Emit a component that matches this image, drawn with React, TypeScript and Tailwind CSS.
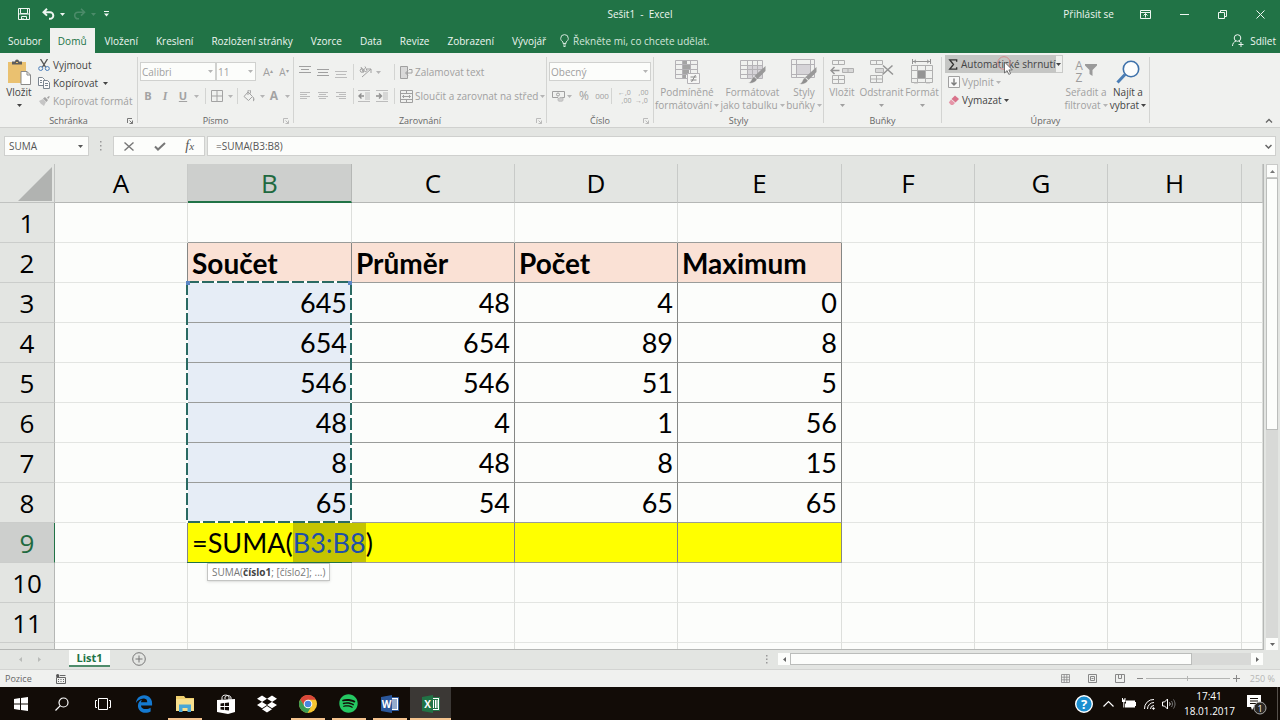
import type { ReactNode } from "react";
import { FaDropbox, FaEdgeLegacy, FaSpotify } from "react-icons/fa";

type Tone = "on" | "off";

function Arrow({ className = "" }: { className?: string }) {
  return (
    <svg viewBox="0 0 5 3" className={`h-[3px] w-[5px] shrink-0 ${className}`} fill="currentColor">
      <path d="M0 0h5L2.500 3z" />
    </svg>
  );
}

function Launcher({ tone }: { tone: Tone }) {
  return (
    <svg viewBox="0 0 6 6" className={`h-[6px] w-[6px] ${tone === "on" ? "text-[#777]" : "text-[#bbb]"}`} fill="none" stroke="currentColor">
      <path d="M.5 5V.5H5M2.500 2.500l3 3M5.500 2.500v3h-3" />
    </svg>
  );
}

function Group({ label, width, launcher, children }: { label: string; width: string; launcher?: Tone; children: ReactNode }) {
  return (
    <section aria-label={label} className={`flex shrink-0 flex-col justify-between ${width}`}>
      <div>{children}</div>
      <div className="relative flex h-3 items-center justify-center text-[9px] leading-3 text-[#666]">
        {label}
        {launcher && (
          <button aria-label={`${label} – další možnosti`} className="absolute right-1">
            <Launcher tone={launcher} />
          </button>
        )}
      </div>
    </section>
  );
}

function Divider() {
  return <div className="my-1 w-px shrink-0 bg-[#d3d4d2]" />;
}

function Sep() {
  return <div className="h-4 w-px bg-[#d3d4d2]" />;
}

function BigButton({ icon, lines, width, tone = "off", split = false }: { icon: ReactNode; lines: string[]; width: string; tone?: Tone; split?: boolean }) {
  return (
    <button className={`flex shrink-0 flex-col items-center leading-[13px] whitespace-nowrap ${width} ${tone === "on" ? "text-[#444]" : "text-[#a0a0a0]"}`}>
      <span className="flex h-7 items-center">{icon}</span>
      <span>{lines[0]}</span>
      <span className="flex h-[13px] items-center gap-0.5">
        {!split && lines[1]}
        <Arrow className={split || tone === "on" ? "" : "text-[#b5b5b5]"} />
      </span>
    </button>
  );
}

function HLines({ ys, xs, className = "" }: { ys: number[]; xs: [number, number][]; className?: string }) {
  return (
    <svg viewBox="0 0 12 12" className={`h-3 w-3 ${className}`} stroke="currentColor" fill="none">
      {ys.map((y, i) => (
        <path key={y} d={`M${xs[i][0]} ${y}H${xs[i][1]}`} />
      ))}
    </svg>
  );
}

function IconButton({ label, width, children }: { label: string; width: string; children: ReactNode }) {
  return (
    <button aria-label={label} className={`flex h-[18px] items-center justify-center ${width}`}>
      {children}
    </button>
  );
}

/* ---------- title bar and tabs ---------- */

function TitleBar() {
  return (
    <header className="grid h-7 grid-cols-3 items-center text-[#eef6f1]">
      <div className="flex items-center pl-[18px]">
        <button aria-label="Uložit">
          <svg viewBox="0 0 12 12" className="h-3 w-3" fill="none" stroke="currentColor">
            <path d="M.5.5h11v11H.5zM2.500.5v5h7v-5M3.500 11.500v-3h5v3" />
            <path d="M1 6h10M5 10v1.500" />
          </svg>
        </button>
        <button aria-label="Zpět" className="ml-3 flex items-center gap-[5px]">
          <svg viewBox="0 0 13 12" className="h-3 w-[13px]" fill="none" stroke="currentColor" strokeWidth="2">
            <path d="M5 .8 1.500 4.200 5 7.600M1.500 4.200H8a3.300 3.300 0 0 1 0 6.600H7" />
          </svg>
          <Arrow />
        </button>
        <button aria-label="Znovu" className="ml-2 flex items-center gap-[5px] text-[#4b8b69]">
          <svg viewBox="0 0 13 12" className="h-3 w-[13px]" fill="none" stroke="currentColor" strokeWidth="1.600">
            <path d="M8 .8l3.500 3.400L8 7.600M11.500 4.200H5a3.300 3.300 0 0 0 0 6.600h1" />
          </svg>
          <Arrow />
        </button>
        <button aria-label="Přizpůsobit panel nástrojů" className="ml-2">
          <svg viewBox="0 0 5 6" className="h-[6px] w-[5px]" fill="currentColor">
            <path d="M0 0h5v1H0zM0 2.500h5L2.500 5.500z" />
          </svg>
        </button>
      </div>
      <h1 className="text-center whitespace-pre">{"Sešit1  -  Excel"}</h1>
      <div className="flex items-center justify-end pr-[15px]">
        <button className="mr-[26px]">Přihlásit se</button>
        <button aria-label="Možnosti pásu karet" className="mr-[29px]">
          <svg viewBox="0 0 11 9" className="h-[9px] w-[11px]" fill="none" stroke="currentColor">
            <path d="M.5.5h10v8H.5zM.5 2.500h10M5.500 7.500v-4M3.500 5.500l2-2 2 2" />
          </svg>
        </button>
        <button aria-label="Minimalizovat" className="mr-[29px] flex h-[9px] items-center">
          <span className="h-px w-[9px] bg-[#eef6f1]" />
        </button>
        <button aria-label="Obnovit" className="mr-[29px]">
          <svg viewBox="0 0 9 9" className="h-[9px] w-[9px]" fill="none" stroke="currentColor">
            <path d="M.5 2.500h6v6h-6zM2.500 2.500v-2h6v6h-2" />
          </svg>
        </button>
        <button aria-label="Zavřít">
          <svg viewBox="0 0 9 9" className="h-[9px] w-[9px]" fill="none" stroke="currentColor">
            <path d="M.5.5l8 8M8.500.5l-8 8" />
          </svg>
        </button>
      </div>
    </header>
  );
}

const tabs = ["Soubor", "Domů", "Vložení", "Kreslení", "Rozložení stránky", "Vzorce", "Data", "Revize", "Zobrazení", "Vývojář"];

function tabClass(index: number) {
  if (index === 0) return "px-2";
  if (index === 1) return "mr-px px-2 bg-[#f0f1ef] text-[#217346]";
  return "px-[9px]";
}

function TabBar() {
  return (
    <nav className="flex h-[25px] items-stretch text-[#eef6f1]">
      {tabs.map((t, i) => (
        <button key={t} className={`whitespace-nowrap ${tabClass(i)}`}>
          {t}
        </button>
      ))}
      <button className="ml-[5px] flex items-center gap-1 whitespace-nowrap text-[#d3e6db]">
        <svg viewBox="0 0 9 13" className="h-[13px] w-[9px]" fill="none" stroke="currentColor">
          <path d="M3 9.500V8C1.500 7 .7 6 .7 4.400a3.800 3.800 0 0 1 7.600 0C8.300 6 7.500 7 6 8v1.500zM3 11h3M3.500 12.500h2" />
        </svg>
        Řekněte mi, co chcete udělat.
      </button>
      <button className="mr-1 ml-auto flex items-center gap-[6px]">
        <svg viewBox="0 0 12 13" className="h-[13px] w-3" fill="none" stroke="currentColor">
          <circle cx="5.500" cy="4" r="3.300" />
          <path d="M.5 12c0-2.500 1.500-4.300 3.500-5M7 7l1.200 1.500M9 8v5M6.500 10.500h5" />
        </svg>
        Sdílet
      </button>
    </nav>
  );
}

/* ---------- ribbon ---------- */

function Ribbon() {
  return (
    <div className="flex h-[75px] shrink-0 overflow-hidden border-b border-[#d0d1cf] bg-[#f0f1ef] text-[#a0a0a0]">
      <Group label="Schránka" width="w-[137px]" launcher="on">
        <div className="flex pt-[5px] text-[#444]">
          <BigButton
            width="w-[38px]"
            tone="on"
            split
            lines={["Vložit"]}
            icon={
              <svg viewBox="0 0 24 26" className="h-[26px] w-6">
                <path d="M1 3h18v21H1z" fill="#eac170" />
                <path d="M5 5.500V2.500h3a2 2 0 0 1 4 0h3v3z" fill="#5d5d5d" />
                <path d="M9 3.500h2" stroke="#eac170" />
                <path d="M14 12.500h6l3.500 3.500v9.500H14z" fill="#fff" stroke="#8a8a8a" />
                <path d="M20 12.500V16h3.500" fill="none" stroke="#8a8a8a" />
              </svg>
            }
          />
          <div className="-mt-[3px] flex flex-col leading-[18px]">
            <button className="flex h-[19px] items-center gap-[3px] whitespace-nowrap">
              <svg viewBox="0 0 12 12" className="h-3 w-3" fill="none">
                <path d="M2.500 0l5 8M9.500 0l-5 8" stroke="#555" strokeWidth="1.400" />
                <circle cx="2.700" cy="9.500" r="2" stroke="#4a7ebb" />
                <circle cx="9.300" cy="9.500" r="2" stroke="#4a7ebb" />
              </svg>
              Vyjmout
            </button>
            <button className="flex h-[18px] items-center gap-[3px] whitespace-nowrap">
              <svg viewBox="0 0 12 12" className="h-3 w-3" fill="#fbfbfb" stroke="#7a8590">
                <path d="M.5.5h4l2 2v6h-6zM2 3.500h2M2 5.500h2" />
                <path d="M5.500 3.500h4l2 2v6h-6zM7 6.500h3M7 8.500h3" />
              </svg>
              Kopírovat
              <Arrow className="ml-0.5" />
            </button>
            <button className="flex h-[18px] items-center gap-[3px] whitespace-nowrap text-[#a0a0a0]">
              <svg viewBox="0 0 12 12" className="h-3 w-3" fill="#a5a5a5">
                <path d="M1 6l4-2 3 3-2 4-2-1.500L3 9z" fill="#c5c5c5" />
                <path d="M5 3.500L7 2l3 3-1.500 2zM9 2.500L11 1l.8.8L10.200 4z" />
              </svg>
              Kopírovat formát
            </button>
          </div>
        </div>
      </Group>
      <Divider />

      <Group label="Písmo" width="w-[155px]" launcher="off">
        <div className="flex flex-col gap-[6px] pt-[9px] pl-[2px]">
          <div className="flex items-center">
            <label className="flex h-[19px] w-[76px] items-center border border-[#d0d1cf] bg-[#fcfdfb] pr-[2px]">
              <select aria-label="Písmo" className="min-w-0 flex-1 appearance-none pl-px outline-none">
                <option>Calibri</option>
              </select>
              <Arrow className="text-[#b5b5b5]" />
            </label>
            <label className="flex h-[19px] w-10 items-center border border-[#d0d1cf] bg-[#fcfdfb] pr-[2px]">
              <select aria-label="Velikost písma" className="min-w-0 flex-1 appearance-none pl-px outline-none">
                <option>11</option>
              </select>
              <Arrow className="text-[#b5b5b5]" />
            </label>
            <button aria-label="Zvětšit písmo" className="ml-1 w-4 text-[11px] leading-4">A<sup className="text-[6px]">▴</sup></button>
            <button aria-label="Zmenšit písmo" className="w-4 text-[10px] leading-4">A<sup className="text-[6px]">▾</sup></button>
          </div>
          <div className="flex items-center text-[#a3a3a3]">
            <IconButton label="Tučné" width="w-[16px]"><b className="text-[11px]">B</b></IconButton>
            <IconButton label="Kurzíva" width="w-[18px]"><b className="font-['Liberation_Serif',serif] text-[12px] italic">I</b></IconButton>
            <IconButton label="Podtržené" width="w-[18px]"><b className="text-[11px] underline">U</b></IconButton>
            <Arrow className="mx-[2px] text-[#b5b5b5]" />
            <div className="ml-1"><Sep /></div>
            <IconButton label="Ohraničení" width="w-[22px]">
              <svg viewBox="0 0 12 12" className="h-3 w-3" fill="none" stroke="currentColor">
                <path d="M.5.5h11v11H.5zM6 .5v11M.5 6h11" />
              </svg>
            </IconButton>
            <Arrow className="text-[#b5b5b5]" />
            <div className="ml-[4px]"><Sep /></div>
            <IconButton label="Barva výplně" width="w-[22px]">
              <svg viewBox="0 0 12 12" className="h-3 w-3" fill="none" stroke="currentColor">
                <path d="M5 2l4.500 4.500L5.500 10.500 1 6.500zM5 5V1a1.200 1.200 0 0 1 2.400 0v2.500" />
                <path d="M10 7c1.500 2 1 4 0 4" fill="currentColor" />
              </svg>
            </IconButton>
            <Arrow className="text-[#b5b5b5]" />
            <IconButton label="Barva písma" width="w-[18px]"><b className="text-[12px]">A</b></IconButton>
            <Arrow className="ml-0.5 text-[#b5b5b5]" />
          </div>
        </div>
      </Group>
      <Divider />

      <Group label="Zarovnání" width="w-[252px]" launcher="off">
        <div className="flex flex-col gap-[6px] pt-[10px] pl-[5px]">
          <div className="flex h-[18px] items-center">
            <button aria-label="Zarovnat nahoru" className="w-[18px]"><HLines ys={[0.5, 3.500, 6.500]} xs={[[0, 12], [2, 10], [0, 12]]} /></button>
            <button aria-label="Zarovnat doprostřed" className="w-[18px]"><HLines ys={[3.500, 6.500, 9.500]} xs={[[0, 12], [1, 11], [0, 12]]} /></button>
            <button aria-label="Zarovnat dolů" className="w-[18px]"><HLines className="text-[#bcbcbc]" ys={[5.500, 8.500, 11.500]} xs={[[0, 12], [1, 11], [0, 12]]} /></button>
            <Sep />
            <IconButton label="Orientace" width="w-[22px]">
              <svg viewBox="0 0 13 12" className="h-3 w-[13px]" fill="none" stroke="currentColor">
                <path d="M3 11l9-8M12 7V3H8" />
                <circle cx="3" cy="4.500" r="1.800" />
                <path d="M4.500 6.500L2 1M6 .5l2 4a1.600 1.600 0 1 1-2-2" />
              </svg>
            </IconButton>
            <Arrow className="text-[#b5b5b5]" />
            <div className="w-[13px]" />
            <Sep />
            <button className="ml-[5px] flex items-center gap-[2px] whitespace-nowrap">
              <svg viewBox="0 0 13 13" className="h-[13px] w-[13px]" fill="none" stroke="currentColor">
                <path d="M.5.5h7v12h-7z" fill="#d9d9d9" />
                <path d="M9 3.500h3v3.500H6M8 4.500L5.500 7 8 9.500" />
              </svg>
              Zalamovat text
            </button>
          </div>
          <div className="flex h-[18px] items-center">
            <button aria-label="Zarovnat vlevo" className="w-[18px]"><HLines className="text-[#bcbcbc]" ys={[2.500, 4.500, 6.500, 8.500]} xs={[[1, 11], [1, 8], [1, 11], [1, 8]]} /></button>
            <button aria-label="Zarovnat na střed" className="w-[18px]"><HLines className="text-[#bcbcbc]" ys={[2.500, 4.500, 6.500, 8.500]} xs={[[1, 11], [2, 9], [1, 11], [2, 9]]} /></button>
            <button aria-label="Zarovnat vpravo" className="w-[18px]"><HLines className="text-[#bcbcbc]" ys={[2.500, 4.500, 6.500, 8.500]} xs={[[1, 11], [4, 11], [1, 11], [4, 11]]} /></button>
            <Sep />
            <IconButton label="Zmenšit odsazení" width="w-[20px]">
              <svg viewBox="0 0 12 12" className="h-3 w-3">
                <path d="M0 .5h12M7 3h5M7 5h5M7 7h5M7 9h5M0 11.500h12" stroke="#bcbcbc" />
                <path d="M6 6H1M3.500 3.500L1 6l2.500 2.500" fill="none" stroke="#8f8f8f" strokeWidth="1.400" />
              </svg>
            </IconButton>
            <IconButton label="Zvětšit odsazení" width="w-[16px]">
              <svg viewBox="0 0 12 12" className="h-3 w-3">
                <path d="M0 .5h12M7 3h5M7 5h5M7 7h5M7 9h5M0 11.500h12" stroke="#bcbcbc" />
                <path d="M0 6h5M3 3.500L5.500 6 3 8.500" fill="none" stroke="#8f8f8f" strokeWidth="1.400" />
              </svg>
            </IconButton>
            <div className="w-1" />
            <Sep />
            <button className="ml-[5px] flex items-center gap-[2px] whitespace-nowrap">
              <svg viewBox="0 0 13 13" className="h-[13px] w-[13px]" fill="none" stroke="currentColor">
                <path d="M.5.5h12v12H.5zM.5 3.500h12M.5 9.500h12M6.500.5v3M6.500 9.500v3M2.500 6.500h8M4 5L2.500 6.500 4 8M9 5l1.500 1.500L9 8" />
              </svg>
              Sloučit a zarovnat na střed
              <Arrow className="text-[#b5b5b5]" />
            </button>
          </div>
        </div>
      </Group>
      <Divider />

      <Group label="Číslo" width="w-[106px]" launcher="off">
        <div className="flex flex-col gap-[6px] pt-[9px] pl-[2px]">
          <label className="flex h-[19px] w-[102px] items-center border border-[#d0d1cf] bg-[#fcfdfb] pr-[2px]">
            <select aria-label="Formát čísla" className="min-w-0 flex-1 appearance-none pl-px outline-none">
              <option>Obecný</option>
            </select>
            <Arrow className="text-[#b5b5b5]" />
          </label>
          <div className="flex h-[18px] items-center">
            <IconButton label="Účetní formát" width="w-[18px]">
              <svg viewBox="0 0 13 12" className="h-3 w-[13px]" fill="none" stroke="currentColor">
                <path d="M.5 1.500h12v6H8M6 7.500H.5v-6" />
                <circle cx="6" cy="4.500" r="1.500" />
                <path d="M6 8.500c2-1 5-1 5 0v2c0 1-5 1-5 0z" fill="#cfcfcf" stroke="#bdbdbd" />
              </svg>
            </IconButton>
            <Arrow className="text-[#b5b5b5]" />
            <button className="ml-[5px] w-[14px] text-[12px]">%</button>
            <button className="ml-0.5 w-[18px] text-[8px]">000</button>
            <div className="mr-[6px]"><Sep /></div>
            <button aria-label="Přidat desetinné místo" className="flex w-[17px] flex-col items-start">
              <span className="flex h-2 items-center text-[7px] leading-none">←,0</span>
              <span className="flex h-2 items-center self-center text-[7px] leading-none">,00</span>
            </button>
            <button aria-label="Odebrat desetinné místo" className="flex w-[17px] flex-col items-start">
              <span className="flex h-2 items-center self-center text-[7px] leading-none">,00</span>
              <span className="flex h-2 items-center text-[7px] leading-none">→,0</span>
            </button>
          </div>
        </div>
      </Group>
      <Divider />

      <Group label="Styly" width="w-[169px]">
        <div className="flex pt-[5px]">
          <BigButton
            width="w-[66px]"
            lines={["Podmíněné", "formátování"]}
            icon={
              <svg viewBox="0 0 25 24" className="h-6 w-[25px]" fill="none" stroke="#b4b2b6">
                <path d="M.5.5h22v18H.5zM.5 4.500h22M.5 9.500h22M.5 14.500h22M7.500.5v18M15.500.5v18" />
                <path d="M8 1h4v3H8zM8 5h7v4H8zM8 10h6v4H8zM8 15h3v3H8z" fill="#a3a3a3" stroke="none" />
                <path d="M12.500 13.500h12v10h-12z" fill="#f6f6f5" />
                <path d="M15.500 17h6M15.500 20h6M20.500 15l-4 7" stroke="#8a8a8a" />
              </svg>
            }
          />
          <BigButton
            width="w-[65px]"
            lines={["Formátovat", "jako tabulku"]}
            icon={
              <svg viewBox="0 0 26 24" className="h-6 w-[26px]" fill="none" stroke="#b4b2b6">
                <path d="M7.500 5h15v13h-15z" fill="#d6d4d8" stroke="none" />
                <path d="M.5.5h22v18H.5zM.5 5.500h22M.5 9.500h22M.5 14.500h22M7.500.5v18M12.500.5v18M17.500.5v18" />
                <path d="M25.500 6v5l-8 8-3-3z" fill="#999" stroke="none" />
                <path d="M14 16.500l3 3c-2 3.500-5 4-9 3.500 4-1 3-5 6-6.500z" fill="#8f8f8f" stroke="#f0f1ef" strokeWidth=".5" />
              </svg>
            }
          />
          <BigButton
            width="w-[38px]"
            lines={["Styly", "buňky"]}
            icon={
              <svg viewBox="0 0 26 26" className="h-[26px] w-[26px]" fill="none" stroke="#b4b2b6">
                <path d="M5.500 6h14v9h-14z" fill="#d6d4d8" stroke="none" />
                <path d="M.5.5h23v18H.5zM.5 5.500h23M.5 15.500h23M5.500.5v18M19.500.5v18" />
                <path d="M25.500 8v5l-8 8-3-3z" fill="#999" stroke="none" />
                <path d="M14 18.500l3 3c-2 3.500-5 4-9 3.500 4-1 3-5 6-6.500z" fill="#8f8f8f" stroke="#f0f1ef" strokeWidth=".5" />
              </svg>
            }
          />
        </div>
      </Group>
      <Divider />

      <Group label="Buňky" width="w-[117px]">
        <div className="flex pt-[5px]">
          <BigButton
            width="w-[36px]"
            split
            lines={["Vložit"]}
            icon={
              <svg viewBox="0 0 24 24" className="h-6 w-6" fill="none" stroke="#b0b0b0">
                <path d="M2.500.5h12v4h-12zM8.500.5v4M2.500 15.500h12v8h-12zM8.500 15.500v8M2.500 19.500h12" />
                <path d="M12.500 8.500h11v4h-11zM18 8.500v4" fill="#d8d8d8" />
                <path d="M9.500 10.500H1M4.500 7L1 10.500 4.500 14" stroke="#949494" strokeWidth="1.500" />
              </svg>
            }
          />
          <BigButton
            width="w-[43px]"
            split
            lines={["Odstranit"]}
            icon={
              <svg viewBox="0 0 24 24" className="h-6 w-6" fill="none" stroke="#b0b0b0">
                <path d="M.5.5h12v4H.5zM6.500.5v4M.5 15.500h12v7H.5zM6.500 15.500v7M.5 19h12" />
                <path d="M5.500 8.500h8v4h-8z" fill="#d8d8d8" />
                <path d="M13 5.500l10 9M22.500 5.500l-10 9" stroke="#949494" strokeWidth="1.500" />
              </svg>
            }
          />
          <BigButton
            width="w-[38px]"
            split
            lines={["Formát"]}
            icon={
              <svg viewBox="0 0 24 26" className="h-[26px] w-6" fill="none" stroke="#b0b0b0">
                <path d="M2.500 0v5M20.500 0v5M3 2.500h17M6 .8L4 2.500l2 1.700M17 .8l2 1.700-2 1.700" stroke="#949494" />
                <path d="M1.500 6.500h21v17h-21zM1.500 11.500h21M1.500 19.500h21M7.500 6.500v17M15.500 6.500v17" />
                <path d="M8 12h7v7H8z" fill="#949494" stroke="none" />
                <path d="M4 24h4M16 24h4" stroke="#bbb" />
              </svg>
            }
          />
        </div>
      </Group>
      <Divider />

      <Group label="Úpravy" width="w-[207px]">
        <div className="flex">
          <div className="flex w-[121px] shrink-0 flex-col pt-[2px] pl-[3px] text-[#444]">
            <div className="relative flex h-[18px]">
              <button className="flex w-[111px] items-center gap-[3px] bg-[#c5c6c4] pl-[3px] whitespace-nowrap">
                <svg viewBox="0 0 10 12" className="h-[11px] w-[10px] shrink-0" fill="none" stroke="#333" strokeWidth="1.500">
                  <path d="M9 3V1H1.500L5.500 6l-4 5H9V9" />
                </svg>
                Automatické shrnutí
              </button>
              <button aria-label="Další funkce" className="flex w-[9px] items-center justify-center border border-l-0 border-[#c9cac8]">
                <Arrow />
              </button>
              <svg viewBox="0 0 16 20" className="pointer-events-none absolute top-0 left-[52px] h-5 w-4">
                <circle cx="7" cy="8" r="6.300" fill="none" stroke="#d48a8a" />
                <path d="M7.500 7v11l2.600-2.400 1.700 3.800 1.800-.8-1.700-3.700h3.400z" fill="#fff" stroke="#555" strokeWidth=".8" />
              </svg>
            </div>
            <button className="flex h-[18px] items-center gap-[2px] pl-[3px] text-[#a0a0a0]">
              <svg viewBox="0 0 12 12" className="h-3 w-3" fill="none" stroke="currentColor">
                <path d="M.5.5h11v11H.5z" fill="#f8f8f8" />
                <path d="M6 2.500V9M3.500 6.500L6 9l2.500-2.500" stroke="#7d7d7d" strokeWidth="1.400" />
              </svg>
              Vyplnit
              <Arrow className="text-[#b5b5b5]" />
            </button>
            <button className="flex h-[18px] items-center gap-[2px] pl-[3px]">
              <svg viewBox="0 0 12 12" className="h-3 w-3">
                <path d="M7 1.500l4 3.500-3.500 3.500-4-3.500z" fill="#d9738b" />
                <path d="M3 5.500L7 9l-2 2H3L.8 8.500z" fill="#e596a8" />
              </svg>
              Vymazat
              <Arrow />
            </button>
          </div>
          <div className="flex pt-[5px]">
            <BigButton
              width="w-[46px]"
              lines={["Seřadit a", "filtrovat"]}
              icon={
                <span className="flex items-center gap-0.5 text-[#9c9c9c]">
                  <span className="flex flex-col text-[12px] leading-3">
                    <span>A</span>
                    <span>Z</span>
                  </span>
                  <svg viewBox="0 0 12 12" className="mb-1 h-3 w-3" fill="#9a9a9a">
                    <path d="M0 0h12v1.500L7.500 6v6l-3-2V6L0 1.500z" />
                  </svg>
                </span>
              }
            />
            <BigButton
              width="w-[38px]"
              tone="on"
              lines={["Najít a", "vybrat"]}
              icon={
                <svg viewBox="0 0 24 24" className="h-6 w-6" fill="none">
                  <path d="M9 14.500l-7.500 8" stroke="#4a7db5" strokeWidth="3" />
                  <circle cx="15" cy="9" r="7.700" fill="#fcfdfd" stroke="#3f72ab" strokeWidth="1.600" />
                </svg>
              }
            />
          </div>
        </div>
      </Group>
      <Divider />
      <button aria-label="Sbalit pás karet" className="mt-auto mr-[7px] mb-1 ml-auto">
        <svg viewBox="0 0 8 5" className="h-[5px] w-2" fill="none" stroke="#666" strokeWidth="1.300">
          <path d="M1 4.500l3-3 3 3" />
        </svg>
      </button>
    </div>
  );
}

/* ---------- formula bar ---------- */

function FormulaBar() {
  return (
    <div className="flex h-9 shrink-0 items-center px-1 text-[#555]">
      <label className="flex h-5 w-[85px] items-center border border-[#cfd0ce] bg-[#fcfdfb] pr-[5px]">
        <input aria-label="Pole názvů" defaultValue="SUMA" className="min-w-0 flex-1 pl-1 outline-none" />
        <Arrow />
      </label>
      <svg viewBox="0 0 2 10" className="mx-[11px] h-[10px] w-[2px]" fill="#999">
        <path d="M0 0h1.500v1.500H0zM0 4h1.500v1.500H0zM0 8h1.500v1.500H0z" />
      </svg>
      <div className="flex h-5 w-[92px] items-center justify-around border border-[#cfd0ce] bg-[#fcfdfb]">
        <button aria-label="Storno">
          <svg viewBox="0 0 10 9" className="h-[9px] w-[10px]" fill="none" stroke="#777" strokeWidth="1.400">
            <path d="M.5.5l9 8M9.500.5l-9 8" />
          </svg>
        </button>
        <button aria-label="Zadat">
          <svg viewBox="0 0 12 9" className="h-[9px] w-3" fill="none" stroke="#777" strokeWidth="2">
            <path d="M1 4.500L4 7.500 11 1" />
          </svg>
        </button>
        <button aria-label="Vložit funkci" className="font-['Liberation_Serif',serif] text-[14px] leading-4 italic">
          f<span className="text-[11px]">x</span>
        </button>
      </div>
      <label className="ml-[2px] flex h-5 flex-1 items-center border border-[#cfd0ce] bg-[#fcfdfb] pr-[3px]">
        <input aria-label="Řádek vzorců" defaultValue="=SUMA(B3:B8)" className="min-w-0 flex-1 pl-2 outline-none" />
        <svg viewBox="0 0 7 5" className="h-[5px] w-[7px]" fill="none" stroke="#666" strokeWidth="1.500">
          <path d="M.5 1l3 3 3-3" />
        </svg>
      </label>
    </div>
  );
}

/* ---------- sheet ---------- */

const columns = [
  { name: "A", width: "w-[133px]" },
  { name: "B", width: "w-[164px]" },
  { name: "C", width: "w-[163px]" },
  { name: "D", width: "w-[163px]" },
  { name: "E", width: "w-[164px]" },
  { name: "F", width: "w-[133px]" },
  { name: "G", width: "w-[133px]" },
  { name: "H", width: "w-[134px]" },
  { name: "", width: "" },
];

const data: Record<number, string[]> = {
  2: ["Součet", "Průměr", "Počet", "Maximum"],
  3: ["645", "48", "4", "0"],
  4: ["654", "654", "89", "8"],
  5: ["546", "546", "51", "5"],
  6: ["48", "4", "1", "56"],
  7: ["8", "48", "8", "15"],
  8: ["65", "54", "65", "65"],
  9: ["", "", "", ""],
};

const rows = [1, 2, 3, 4, 5, 6, 7, 8, 9, 10, 11];

function cellFill(row: number, col: number) {
  if (col < 1 || col > 4 || row < 2 || row > 9) return "bg-[#fcfdfb]";
  if (row === 2) return "bg-[#fae1d5] pl-1 text-left text-[28px] font-bold";
  if (row === 9) return "bg-[#ffff00]";
  if (col === 1) return "bg-[#e6edf6] pr-1 text-right";
  return "bg-[#fcfdfb] pr-1 text-right";
}

function cellClass(row: number, col: number) {
  const right = row >= 2 && row <= 9 && col <= 4 ? "border-r-[#858785]" : "border-r-[#dddfdc]";
  const bottom = row <= 9 && col >= 1 && col <= 4 ? "border-b-[#9a9c9a]" : "border-b-[#e3e5e2]";
  return `relative h-10 border-r border-b p-0 ${right} ${bottom} ${cellFill(row, col)}`;
}

function Marquee() {
  return (
    <svg className="pointer-events-none absolute -top-[2px] -left-[2px] z-10 h-[243px] w-[166px]" fill="none">
      <rect x="1" y="1" width="164" height="240" stroke="#fff" strokeWidth="2" />
      <rect x="1" y="1" width="164" height="240" stroke="#2a6a62" strokeWidth="2" strokeDasharray="12 3" />
      <path d="M0 0h4v4H0zM162 0h4v4h-4z" fill="#5b86c4" />
    </svg>
  );
}

function CellEditor() {
  return (
    <>
      <div className="absolute top-0 left-0 z-10 flex h-[39px] items-center bg-[#ffff00] pl-1 whitespace-nowrap">
        =SUMA(<span className="flex h-full items-center bg-[#c4c400] text-[#1f4fa8]">B3:B8</span>)
      </div>
      <div className="absolute -bottom-px -left-px z-20 h-px w-[165px] bg-[#217346]" />
      <div className="absolute top-10 left-[19px] z-20 flex h-[18px] items-center border border-[#c4c5c3] bg-white px-1 font-['Open_Sans',sans-serif] text-[10px] whitespace-nowrap text-[#777] shadow-sm">
        SUMA(<b className="text-[#444]">číslo1</b>; [číslo2]; ...)
      </div>
    </>
  );
}

function Sheet() {
  return (
    <div className="flex min-h-0 flex-1">
      <div className="min-w-0 flex-1 overflow-hidden border-r border-b border-[#b5b7b5] bg-[#fcfdfb]">
        <table className="w-full table-fixed border-separate border-spacing-0 text-black">
          <thead className="bg-[#e3e5e2] text-[26px] leading-8">
            <tr>
              <th aria-label="Vybrat vše" className="h-[39px] w-[55px] border-r border-b border-[#c0c2c0] p-0">
                <svg viewBox="0 0 34 34" className="mt-[2px] ml-[18px] h-[34px] w-[34px]" fill="#b1b3b1">
                  <path d="M34 0v34H0z" />
                </svg>
              </th>
              {columns.map((c) => (
                <th
                  key={c.name}
                  className={`h-[39px] border-r p-0 font-normal ${c.width} ${
                    c.name === "B" ? "border-b-2 border-r-[#b5b7b5] border-b-[#217346] bg-[#cdcfcd] text-[#1f6a40]" : "border-b border-r-[#c8cac8] border-b-[#b5b7b5]"
                  }`}
                >
                  {c.name}
                </th>
              ))}
            </tr>
          </thead>
          <tbody className="font-[Lato,sans-serif] text-[27px] leading-8">
            {rows.map((r) => (
              <tr key={r}>
                <th
                  className={`h-10 border-r border-b border-b-[#cbcdcb] p-0 font-['Open_Sans',sans-serif] text-[26px] font-normal ${
                    r === 9 ? "border-r-[#217346] bg-[#cdcfcd] text-[#1f6a40]" : "border-r-[#b5b7b5] bg-[#e3e5e2]"
                  }`}
                >
                  {r}
                </th>
                {columns.map((c, i) => (
                  <td key={c.name} className={cellClass(r, i)}>
                    {i >= 1 && i <= 4 && data[r] ? data[r][i - 1] : null}
                    {r === 3 && i === 1 && <Marquee />}
                    {r === 9 && i === 1 && <CellEditor />}
                  </td>
                ))}
              </tr>
            ))}
            <tr>
              <th className="h-10 border-r border-r-[#b5b7b5] bg-[#e3e5e2] p-0" />
              {columns.map((c) => (
                <td key={c.name} className="h-10 border-r border-r-[#dddfdc] p-0" />
              ))}
            </tr>
          </tbody>
        </table>
      </div>
      <div className="flex w-4 shrink-0 flex-col items-center">
        <button aria-label="Nahoru" className="flex h-[14px] w-3 items-center justify-center border border-[#c9cac8] bg-[#fcfdfb] text-[#777]">
          <Arrow className="rotate-180" />
        </button>
        <div className="w-3 flex-1 bg-[#d8d9d7]">
          <div className="h-[252px] w-3 border border-[#bbbdbb] bg-[#fcfdfb]" />
        </div>
        <button aria-label="Dolů" className="flex h-3 w-3 items-center justify-center bg-[#fcfdfb] text-[#666]">
          <Arrow />
        </button>
      </div>
    </div>
  );
}

function SheetTabs() {
  return (
    <div className="flex h-5 shrink-0 items-start border-b border-[#d3d4d2]">
      <div className="flex h-[18px] w-[69px] items-center gap-[14px] pl-[18px] text-[#b9bbb9]">
        <button aria-label="Předchozí list"><Arrow className="rotate-90" /></button>
        <button aria-label="Další list"><Arrow className="-rotate-90" /></button>
      </div>
      <button className="h-[17px] w-[41px] border-b-2 border-[#4f8c6b] bg-[#fcfdfb] text-[11px] leading-[14px] font-bold text-[#217346]">List1</button>
      <button aria-label="Nový list" className="mt-[2px] ml-[22px]">
        <svg viewBox="0 0 14 14" className="h-[14px] w-[14px]" fill="none" stroke="#777">
          <circle cx="7" cy="7" r="6.300" />
          <path d="M7 3.500v7M3.500 7h7" />
        </svg>
      </button>
      <div className="mr-[17px] ml-auto flex h-[18px] items-center">
        <svg viewBox="0 0 2 9" className="mr-[10px] h-[9px] w-[2px]" fill="#999">
          <path d="M0 0h1.500v1.500H0zM0 3.500h1.500V5H0zM0 7h1.500v1.500H0z" />
        </svg>
        <button aria-label="Vlevo" className="flex h-3 w-3 items-center justify-center bg-[#fcfdfb] text-[#666]"><Arrow className="rotate-90" /></button>
        <div className="flex h-3 w-[461px] bg-[#d8d9d7]">
          <div className="h-3 w-[402px] border border-[#bbbdbb] bg-[#fcfdfb]" />
        </div>
        <button aria-label="Vpravo" className="flex h-3 w-3 items-center justify-center bg-[#fcfdfb] text-[#666]"><Arrow className="-rotate-90" /></button>
      </div>
    </div>
  );
}

function StatusBar() {
  return (
    <footer className="flex h-[17px] shrink-0 items-center bg-[#f0f1ef] px-[5px] text-[9px] text-[#666]">
      <span className="w-[51px]">Pozice</span>
      <svg viewBox="0 0 10 10" className="h-[10px] w-[10px]" fill="none" stroke="#666">
        <path d="M.5 3.500h9v6h-9zM4 1.500h5.500M2 5.500h1M4.500 5.500h1M7 5.500h1M2 7.500h1M4.500 7.500h1M7 7.500h1" />
        <circle cx="1.700" cy="1.700" r="1.700" fill="#555" stroke="none" />
      </svg>
      <div className="ml-auto flex items-center text-[#888]">
        <button aria-label="Normální" className="mr-[18px]">
          <svg viewBox="0 0 9 9" className="h-[9px] w-[9px]" fill="none" stroke="currentColor">
            <path d="M.5.5h8v8h-8zM3.200.5v8M5.800.5v8M.5 3.200h8M.5 5.800h8" strokeWidth=".8" />
          </svg>
        </button>
        <button aria-label="Rozložení stránky" className="mr-[18px]">
          <svg viewBox="0 0 9 9" className="h-[9px] w-[9px]" fill="none" stroke="currentColor">
            <path d="M.5.5h8v8h-8zM2.500 2.500h4v4h-4zM3.500 4.500h2" />
          </svg>
        </button>
        <button aria-label="Konce stránek" className="mr-[12px]">
          <svg viewBox="0 0 10 9" className="h-[9px] w-[10px]" fill="none" stroke="currentColor">
            <path d="M.5.5h9v8h-9zM3.500.5v4h3v-4" />
          </svg>
        </button>
        <button aria-label="Oddálit" className="mr-[3px] h-px w-[6px] bg-[#888]" />
        <label className="relative flex h-3 w-[84px] items-center justify-center">
          <input
            aria-label="Lupa"
            type="range"
            min={10}
            max={400}
            defaultValue={250}
            className="h-px w-full appearance-none bg-[#b5b6b4] [&::-webkit-slider-thumb]:h-0 [&::-webkit-slider-thumb]:w-0 [&::-webkit-slider-thumb]:appearance-none"
          />
          <span className="absolute h-[5px] w-px bg-[#b5b6b4]" />
        </label>
        <button aria-label="Přiblížit" className="ml-[3px]">
          <svg viewBox="0 0 7 7" className="h-[7px] w-[7px]" stroke="#888">
            <path d="M3.500 0v7M0 3.500h7" />
          </svg>
        </button>
        <span className="ml-[10px] text-[#b5b6b4]">250 %</span>
      </div>
    </footer>
  );
}

/* ---------- taskbar ---------- */

function Task({ label, open = false, active = false, children }: { label: string; open?: boolean; active?: boolean; children: ReactNode }) {
  return (
    <button aria-label={label} className={`relative flex w-[41px] shrink-0 items-center justify-center ${active ? "bg-[#3b3835]" : ""}`}>
      {children}
      {open && <span className={`absolute bottom-0 h-0.5 bg-[#f5c48f] ${active ? "w-full" : "w-[34px]"}`} />}
    </button>
  );
}

function OfficeIcon({ letter, color, sheet }: { letter: string; color: string; sheet?: boolean }) {
  return (
    <svg viewBox="0 0 18 18" className="h-[18px] w-[18px]">
      <path d="M9 2.500h8.500v13H9z" fill="#fff" stroke={color} />
      {sheet ? (
        <path d="M12.500 4v10M15 4v10M11 4.500h5M11 13.500h5" stroke={color} />
      ) : (
        <path d="M10 5h6M10 7h6M10 9h6M10 11h6M10 13h6" stroke={color} />
      )}
      <path d="M0 2l11-2v18L0 16z" fill={color} />
      <text x="5.500" y="12.500" textAnchor="middle" fill="#fff" fontSize="10" fontWeight="700" fontFamily="Open Sans, sans-serif">
        {letter}
      </text>
    </svg>
  );
}

function Taskbar() {
  return (
    <div className="flex h-[33px] shrink-0 bg-[#120c07] text-white">
      <Task label="Start">
        <svg viewBox="0 0 14 14" className="h-[14px] w-[14px]" fill="currentColor">
          <path d="M0 2l6-.9v5.500H0zM7 1l7-1v6.600H7zM0 7.500h6V13l-6-.9zM7 7.500h7V14l-7-1z" />
        </svg>
      </Task>
      <Task label="Hledat">
        <svg viewBox="0 0 14 14" className="h-[14px] w-[14px]" fill="none" stroke="currentColor" strokeWidth="1.200">
          <circle cx="8.500" cy="5.500" r="4.500" />
          <path d="M5.300 8.700L.5 13.500" />
        </svg>
      </Task>
      <Task label="Zobrazení úloh">
        <svg viewBox="0 0 16 12" className="h-3 w-4" fill="none" stroke="currentColor">
          <path d="M3.500.5h9v11h-9zM2 2.500H.5v7H2M14 2.500h1.500v7H14" />
        </svg>
      </Task>
      <Task label="Edge"><FaEdgeLegacy className="text-[18px] text-[#1479d0]" /></Task>
      <Task label="Průzkumník" open>
        <svg viewBox="0 0 18 16" className="h-4 w-[18px]">
          <path d="M0 0h8l1.500 2H18v13H0z" fill="#efcf6e" />
          <path d="M0 3h18v12H0z" fill="#f8e08e" />
          <path d="M3 16V8.500h12V16h-3.500v-4h-5v4z" fill="#49a7d6" />
        </svg>
      </Task>
      <Task label="Store">
        <svg viewBox="0 0 18 20" className="h-5 w-[18px]">
          <path d="M5 6V3.500C5 .3 12 .3 12 3.500V6M8 5V3c1-2 6-2 6 1v2" fill="none" stroke="#fff" />
          <path d="M0 6l18-1v13l-7 2-11-2z" fill="#fff" />
          <path d="M3.500 9.500l3.500-.4v3H3.500zM7.800 9l4.200-.5v3.600H7.800zM3.500 13H7v3l-3.500-.4zM7.800 13H12v3.600l-4.200-.5z" fill="#120c07" />
        </svg>
      </Task>
      <Task label="Dropbox"><FaDropbox className="text-[20px]" /></Task>
      <Task label="Chrome" open>
        <svg viewBox="0 0 18 18" className="h-[18px] w-[18px]">
          <circle cx="9" cy="9" r="9" fill="#f4c430" />
          <path d="M9 4.800h8a9 9 0 0 0-15.800-.3L5 11z" fill="#d9473a" />
          <path d="M1.200 4.500A9 9 0 0 0 8.500 18l4-7L9 9 5.400 11z" fill="#3a9d55" />
          <circle cx="9" cy="9" r="4.300" fill="#fff" />
          <circle cx="9" cy="9" r="3.300" fill="#4a86e0" />
        </svg>
      </Task>
      <Task label="Spotify" open><FaSpotify className="text-[19px] text-[#25c862]" /></Task>
      <Task label="Word" open><OfficeIcon letter="W" color="#2b579a" /></Task>
      <Task label="Excel" open active><OfficeIcon letter="X" color="#217346" sheet /></Task>

      <div className="ml-auto flex items-center">
        <button aria-label="Nápověda" className="mr-[10px]">
          <svg viewBox="0 0 18 18" className="h-[18px] w-[18px]">
            <circle cx="9" cy="9" r="8.300" fill="#1b8fd0" stroke="#fff" strokeWidth="1.400" />
            <text x="9" y="13.500" textAnchor="middle" fill="#fff" fontSize="13" fontWeight="700" fontFamily="Open Sans, sans-serif">?</text>
          </svg>
        </button>
        <button aria-label="Skryté ikony" className="mr-2">
          <svg viewBox="0 0 11 7" className="h-[7px] w-[11px]" fill="none" stroke="currentColor" strokeWidth="1.200">
            <path d="M.5 6.500l5-5 5 5" />
          </svg>
        </button>
        <svg viewBox="0 0 14 11" className="mr-[7px] h-[11px] w-[14px]" fill="currentColor">
          <path d="M4 2.500h9V4h1v4h-1v1.500H3V5.500h1zM0 0h1v1.500H0zM2.500 0h1v1.500h-1zM0 1.500h3.500V4H2.300v5.500h-1V4H0z" />
        </svg>
        <svg viewBox="0 0 12 12" className="mr-[7px] h-3 w-3" fill="none" stroke="currentColor">
          <path d="M1.500 11A9 9 0 0 1 11 1.500M4.500 11A6.500 6.500 0 0 1 11 4.500M7.500 11A3.500 3.500 0 0 1 11 7.500" />
          <circle cx="10.500" cy="10.500" r=".8" fill="currentColor" />
        </svg>
        <svg viewBox="0 0 14 12" className="mr-2 h-3 w-[14px]" fill="none" stroke="currentColor">
          <path d="M.5 4h2L5.500 1v10L2.500 8h-2zM7.500 4.500c.7 1 .7 2 0 3" />
          <path d="M9.500 3c1.300 2 1.300 4 0 6M11.500 1.500c2 3 2 6 0 9" stroke="#777" />
        </svg>
        <time className="w-[50px] text-center leading-[15px] whitespace-nowrap">
          17:41
          <br />
          18.01.2017
        </time>
        <button aria-label="Oznámení" className="mr-[10px] ml-[13px]">
          <svg viewBox="0 0 20 22" className="h-[22px] w-5">
            <path d="M0 2h14v12H7l-2 3-1-3H0z" fill="#fff" />
            <path d="M3 5.500h8M3 8h8M3 10.500h6" stroke="#120c07" />
            <circle cx="13" cy="15" r="6" fill="#2c2925" stroke="#aaa" />
            <text x="13" y="18.500" textAnchor="middle" fill="#fff" fontSize="9" fontFamily="Open Sans, sans-serif">1</text>
          </svg>
        </button>
        <span className="mr-[2px] h-[33px] w-px bg-[#55504b]" />
      </div>
    </div>
  );
}

export default function App() {
  return (
    <div className="flex h-screen flex-col overflow-hidden bg-[#e3e5e2] font-['Open_Sans',sans-serif] text-[10px] leading-4">
      <div className="shrink-0 bg-[#217346]">
        <TitleBar />
        <TabBar />
      </div>
      <Ribbon />
      <FormulaBar />
      <Sheet />
      <SheetTabs />
      <StatusBar />
      <Taskbar />
    </div>
  );
}
